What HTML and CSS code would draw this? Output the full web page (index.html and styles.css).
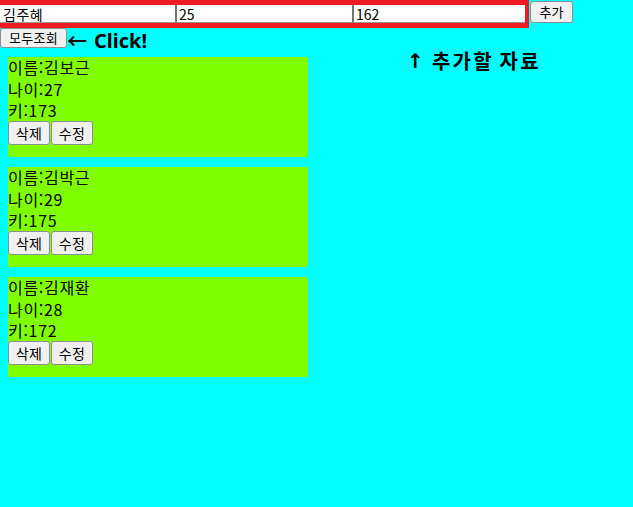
FILE: index.html
```html
<!DOCTYPE html>
<html lang="ko">
<head>
<meta charset="utf-8">
<link rel="stylesheet" href="styles.css">
</head>
<body>
<div class="topbar">
  <div class="form">
    <input class="in in-name" type="text" value="김주혜">
    <input class="in in-age" type="text" value="25">
    <input class="in in-height" type="text" value="162">
  </div>
  <button class="btn btn-add">추가</button>
</div>
<div class="row2">
  <button class="btn btn-all">모두조회</button>
  <span class="note-click"><span class="arrow">←</span><span class="click">Click!</span></span>
</div>
<div class="note-up"><span class="arrow-up">↑</span><span class="up-text">추가할 자료</span></div>
<div class="list">
  <div class="card">
    <div class="line">이름:김보근</div>
    <div class="line">나이:27</div>
    <div class="line">키:173</div>
    <div class="actions"><button class="btn btn-sm">삭제</button><button class="btn btn-sm">수정</button></div>
  </div>
  <div class="card">
    <div class="line">이름:김박근</div>
    <div class="line">나이:29</div>
    <div class="line">키:175</div>
    <div class="actions"><button class="btn btn-sm">삭제</button><button class="btn btn-sm">수정</button></div>
  </div>
  <div class="card">
    <div class="line">이름:김재환</div>
    <div class="line">나이:28</div>
    <div class="line">키:172</div>
    <div class="actions"><button class="btn btn-sm">삭제</button><button class="btn btn-sm">수정</button></div>
  </div>
</div>
</body>
</html>
```
FILE: styles.css
```css
html, body {
  margin: 0;
  padding: 0;
  background: #00ffff;
  font-family: "Noto Sans CJK KR", "Noto Sans", sans-serif;
  color: #000;
}
body { position: relative; height: 507px; }

.topbar {
  display: flex;
  align-items: flex-start;
  height: 28px;
}
.form {
  display: flex;
  background: #ed1c24;
  padding: 5px 4px 5px 0;
}
.in {
  box-sizing: border-box;
  height: 18px;
  margin: 0;
  padding: 0 1px 0 2px;
  border: 0;
  border-left: 2px solid #767676;
  border-bottom: 1px solid #9a9a9a;
  background: #fff;
  font-family: "Noto Sans CJK KR", "Noto Sans", sans-serif;
  font-size: 14px;
  line-height: 16px;
  color: #000;
  outline: none;
}
.in-name { width: 175px; border-left: 0; padding-left: 3px; letter-spacing: 0.5px; }
.in-age { width: 177px; }
.in-height { width: 173px; }

.btn {
  box-sizing: border-box;
  margin: 0;
  padding: 0 6px;
  background: #f0f0f0;
  border: 1px solid #8f8f8f;
  border-radius: 3px;
  font-family: "Noto Sans CJK KR", "Noto Sans", sans-serif;
  font-size: 13px;
  color: #000;
  line-height: 16px;
}
.btn-add {
  margin: 1px 0 0 1px;
  width: 43px;
  height: 22px;
}
.row2 {
  display: flex;
  align-items: flex-start;
  height: 29px;
}
.btn-all {
  width: 67px;
  height: 20px;
  letter-spacing: 0.3px;
}
.note-click {
  display: flex;
  font-weight: bold;
  font-size: 20px;
  line-height: 26px;
}
.arrow {
  font-family: "Noto Sans CJK KR", sans-serif;
  font-weight: bold;
  width: 20px;
  text-align: center;
}
.click {
  font-family: "Noto Sans", "DejaVu Sans", sans-serif;
  margin-left: 7px;
}

.note-up {
  position: absolute;
  left: 407px;
  top: 47px;
  display: flex;
  font-weight: bold;
  font-size: 20px;
  line-height: 28px;
}
.arrow-up {
  font-family: "DejaVu Sans", sans-serif;
  font-weight: bold;
  width: 12px;
}
.up-text {
  margin-left: 13px;
  letter-spacing: 2.2px;
  word-spacing: -2px;
}

.list {
  padding-left: 8px;
}
.card {
  width: 300px;
  height: 100px;
  background: #80ff00;
  margin-bottom: 10px;
}
.line {
  font-size: 16px;
  line-height: 21.5px;
  letter-spacing: 0.7px;
}
.actions { display: flex; margin-top: -0.5px; }
.btn-sm {
  height: 24px;
  font-size: 14px;
  padding: 0 6px;
  width: 42px;
  margin-right: 1px;
  letter-spacing: 0.3px;
}
```
